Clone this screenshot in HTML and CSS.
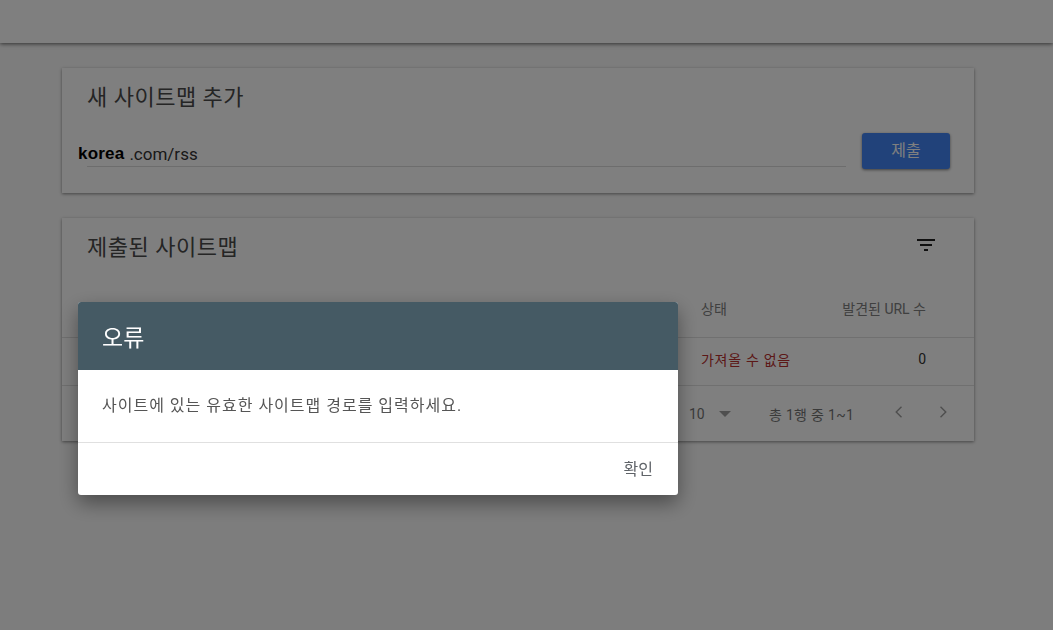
FILE: index.html
```html
<!DOCTYPE html>
<html lang="ko">
  <head>
    <title>Sitemaps</title>
    <link rel="stylesheet" href="styles.css">
  </head>
  <body>
    <header class="topbar"></header>
    <main class="content">
      <section class="card add-card">
        <h2 class="card-title">새 사이트맵 추가</h2>
        <div class="add-row">
          <div class="url-field">
            <span class="domain">korea</span>
            <span class="path">.com/rss</span>
          </div>
          <button class="submit-btn">제출</button>
        </div>
      </section>
      <section class="card list-card">
        <div class="list-head">
          <h2 class="card-title">제출된 사이트맵</h2>
          <svg class="filter-icon" width="24" height="24" viewBox="0 0 24 24"><path d="M10 18h4v-2h-4v2zM3 6v2h18V6H3zm3 7h12v-2H6v2z"/></svg>
        </div>
        <div class="table-row table-header">
          <span class="col-status">상태</span>
          <span class="col-count">발견된 URL 수</span>
        </div>
        <div class="table-row table-body">
          <span class="col-status error">가져올 수 없음</span>
          <span class="col-count">0</span>
        </div>
        <div class="pager">
          <span class="page-size">10</span>
          <span class="caret"></span>
          <span class="page-range">총 1행 중 1~1</span>
          <svg class="page-arrow" width="24" height="24" viewBox="0 0 24 24"><path d="M15 7.2 14 6.2 8.2 12l5.8 5.8 1-1L10.2 12z"/></svg>
          <svg class="page-arrow next" width="24" height="24" viewBox="0 0 24 24"><path d="M10 6.2 9 7.2 13.8 12 9 16.8l1 1 5.8-5.8z"/></svg>
        </div>
      </section>
    </main>
    <div class="scrim"></div>
    <div class="dialog">
      <div class="dialog-title">오류</div>
      <div class="dialog-body">사이트에 있는 유효한 사이트맵 경로를 입력하세요.</div>
      <div class="dialog-actions">
        <a class="ok-btn">확인</a>
      </div>
    </div>
  </body>
</html>
```

FILE: styles.css
```css
* {
  margin: 0;
  padding: 0;
  box-sizing: border-box;
}

body {
  width: 1053px;
  height: 630px;
  overflow: hidden;
  background-color: #fafafa;
  font-family: Roboto, "Noto Sans CJK KR", sans-serif;
  color: #212121;
}

.topbar {
  height: 43px;
  background-color: #fff;
  box-shadow: 0 1px 4px rgba(0, 0, 0, 0.6);
}

.content {
  display: flex;
  flex-direction: column;
  gap: 25px;
  padding: 25px 79px 0 62px;
}

.card {
  background-color: #fff;
  box-shadow: 0 1px 3px rgba(0, 0, 0, 0.45);
}

.card-title {
  font-size: 22px;
  font-weight: 400;
  line-height: 30px;
  letter-spacing: 0.5px;
  color: #4a4a4a;
}

.add-card {
  height: 125px;
  padding: 15px 24px 0 16px;
}

.add-card .card-title {
  padding-left: 9px;
}

.add-row {
  display: flex;
  align-items: flex-start;
  justify-content: space-between;
  margin-top: 20px;
}

.url-field {
  width: 768px;
  height: 34px;
  display: flex;
  align-items: center;
  gap: 5px;
  padding-top: 8px;
  position: relative;
  font-size: 17px;
}

.url-field::after {
  content: "";
  position: absolute;
  left: 9px;
  right: 0;
  bottom: 0;
  height: 1px;
  background-color: #dadada;
}

.domain {
  font-family: "Liberation Sans", sans-serif;
  font-weight: 700;
  letter-spacing: 0.2px;
  color: #000;
}

.path {
  color: #333;
}

.submit-btn {
  width: 88px;
  height: 36px;
  border: none;
  border-radius: 3px;
  padding-bottom: 4px;
  background-color: #4285f4;
  color: #fff;
  font-family: inherit;
  font-size: 16px;
  box-shadow: 0 1px 3px rgba(0, 0, 0, 0.5);
}

.list-card {
  height: 223px;
}

.list-head {
  height: 68px;
  display: flex;
  justify-content: space-between;
  align-items: center;
  padding: 0 36px 8px 25px;
}

.filter-icon {
  fill: #212121;
  margin-bottom: 6px;
}

.table-row {
  display: flex;
  align-items: center;
  padding-left: 639px;
  font-size: 14px;
  border-bottom: 1px solid #e0e0e0;
}

.table-header {
  height: 52px;
  padding-bottom: 7px;
  color: #808080;
}

.table-body {
  height: 48px;
  padding-bottom: 5px;
  color: #333;
}

.col-status {
  width: 120px;
}

.error {
  letter-spacing: 0.7px;
  white-space: nowrap;
  color: #b8312f;
}

.col-count {
  width: 105px;
  text-align: right;
  white-space: nowrap;
}

.pager {
  height: 55px;
  display: flex;
  align-items: center;
  padding-left: 627px;
  font-size: 14px;
  color: #757575;
}

.page-size {
  width: 30px;
}

.caret {
  width: 0;
  height: 0;
  border-left: 6px solid transparent;
  border-right: 6px solid transparent;
  border-top: 6px solid #9e9e9e;
  margin-right: 38px;
}

.page-range {
  width: 118px;
  letter-spacing: 0.3px;
  white-space: nowrap;
}

.page-arrow {
  fill: #9e9e9e;
  margin-bottom: 4px;
}

.page-arrow.next {
  margin-left: 20px;
}

.scrim {
  position: fixed;
  inset: 0;
  background-color: rgba(0, 0, 0, 0.5);
}

.dialog {
  position: fixed;
  left: 78px;
  top: 302px;
  width: 600px;
  height: 193px;
  background-color: #fff;
  border-radius: 3px;
  overflow: hidden;
  box-shadow: 0 8px 20px rgba(0, 0, 0, 0.4);
}

.dialog-title {
  height: 68px;
  padding: 0 24px;
  display: flex;
  align-items: center;
  background-color: #455a64;
  color: #fff;
  font-size: 23px;
}

.dialog-body {
  height: 73px;
  padding: 25px 24px 0;
  font-size: 16px;
  line-height: 22px;
  letter-spacing: 1px;
  color: #555;
  border-bottom: 1px solid #e0e0e0;
}

.dialog-actions {
  height: 52px;
  display: flex;
  align-items: center;
  justify-content: flex-end;
  padding: 0 25px 3px 0;
}

.ok-btn {
  font-size: 16px;
  color: #5f6368;
}
```
